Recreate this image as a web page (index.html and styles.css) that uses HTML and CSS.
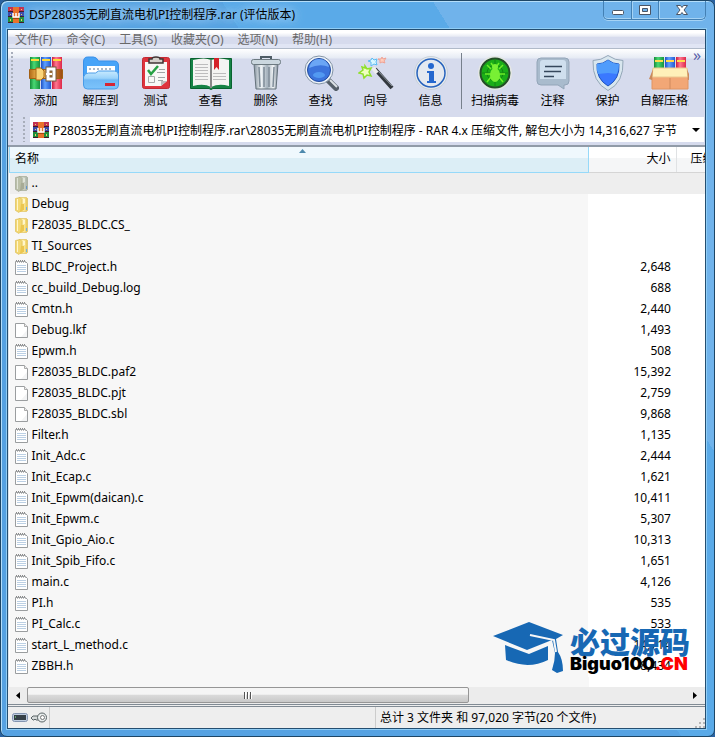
FILE: index.html
```html
<!DOCTYPE html>
<html lang="zh-CN">
<head>
<meta charset="utf-8">
<title>DSP28035无刷直流电机PI控制程序.rar (评估版本)</title>
<link rel="stylesheet" href="styles.css">
</head>
<body>
<svg class="defs" aria-hidden="true">
  <defs>
    <linearGradient id="gold" x1="0" x2="1"><stop offset="0" stop-color="#f0d468"/><stop offset=".5" stop-color="#fff2ae"/><stop offset="1" stop-color="#e8c24a"/></linearGradient>
    <linearGradient id="grey" x1="0" x2="1"><stop offset="0" stop-color="#b4b9a4"/><stop offset=".5" stop-color="#d3d6c8"/><stop offset="1" stop-color="#a5afa5"/></linearGradient>
    <linearGradient id="steel" x1="0" x2="1"><stop offset="0" stop-color="#8795a1"/><stop offset=".3" stop-color="#f0f4f7"/><stop offset=".55" stop-color="#a3b0bb"/><stop offset=".8" stop-color="#f3f6f8"/><stop offset="1" stop-color="#7b8996"/></linearGradient>
    <linearGradient id="sky" x1="0" x2="0" y1="0" y2="1"><stop offset="0" stop-color="#c8eaff"/><stop offset=".4" stop-color="#9bd3fa"/><stop offset=".5" stop-color="#6fb8f5"/><stop offset="1" stop-color="#7cc4fb"/></linearGradient>
    <linearGradient id="green" x1="0" x2="1"><stop offset="0" stop-color="#158a38"/><stop offset=".4" stop-color="#49d873"/><stop offset="1" stop-color="#15913d"/></linearGradient>
    <linearGradient id="blue" x1="0" x2="1"><stop offset="0" stop-color="#1d50c4"/><stop offset=".4" stop-color="#5ea0ff"/><stop offset="1" stop-color="#2459cf"/></linearGradient>
    <linearGradient id="red" x1="0" x2="1"><stop offset="0" stop-color="#c81a3c"/><stop offset=".4" stop-color="#ff7890"/><stop offset="1" stop-color="#dd2848"/></linearGradient>
    <linearGradient id="leather" x1="0" x2="1"><stop offset="0" stop-color="#b06a18"/><stop offset=".3" stop-color="#ffc85c"/><stop offset="1" stop-color="#9c4a10"/></linearGradient>
    <symbol id="rar" viewBox="0 0 16 16">
      <path fill="#c23152" d="M0 0h16v5H0z"/><path fill="#3c4aa8" d="M0 5h16v5H0z"/><path fill="#1f8f3c" d="M0 10h16v6H0z"/>
      <path fill="#f0d060" d="M2 2h1v1H2zM13 2h1v1h-1zM2 7h1v1H2zM13 7h1v1h-1zM2 12h1v2H2zM13 12h1v2h-1z"/>
      <path fill="#401828" d="M0 4h16v1H0zM0 9h16v1H0zM0 15h16v1H0z"/>
      <path fill="#e8722c" d="M5 0h6v16H5z"/><path fill="#a84410" d="M5 11h6v1H5z"/>
      <path fill="none" stroke="#fff" stroke-width="1.500" d="M5 6v4h6V6M8 6v4"/>
    </symbol>
    <symbol id="folder" viewBox="0 0 13 17">
      <path fill="url(#gold)" stroke="#dfc260" stroke-width=".7" d="M4 1.500h7.500l1 1v12l-1 1H4z"/>
      <path fill="#f3d873" stroke="#dcbf5a" stroke-width=".7" d="M.5 2.500 5 1.500l2 2v10l-3 3-3.500-2z"/>
      <path fill="#ecc64f" d="M6 8h3v6l-4 2z"/><path fill="#fff6cc" d="M2 3h1v11H2zM8 3h2v4H8z"/><path fill="#6fb0e6" d="M11 11h1v3h-1z"/>
    </symbol>
    <symbol id="upfolder" viewBox="0 0 13 17">
      <path fill="url(#grey)" stroke="#a2a894" stroke-width=".7" d="M4 1.500h7.500l1 1v12l-1 1H4z"/>
      <path fill="#babfa9" stroke="#a0a693" stroke-width=".7" d="M.5 2.500 5 1.500l2 2v10l-3 3-3.500-2z"/>
      <path fill="#a7ab95" d="M6 8h3v6l-4 2z"/><path fill="#dfe3d7" d="M2 3h1v11H2zM8 3h2v4H8z"/><path fill="#6395cc" d="M11 11h1v3h-1z"/>
    </symbol>
    <symbol id="text" viewBox="0 0 13 17">
      <path fill="#fff" stroke="#9a9d9f" d="M.5 2.500h10l2 2v11H.5z"/>
      <path stroke="#bcd0e4" d="M2 6.500h9M2 8.500h9M2 10.500h9M2 12.500h9"/>
      <path stroke="#8a8a8a" stroke-dasharray="1 1" d="M1 1.500h10"/><path stroke="#bbb" stroke-dasharray="1 1" d="M2 3.500h9"/>
    </symbol>
    <symbol id="page" viewBox="0 0 13 17">
      <path fill="#fff" stroke="#9a9d9f" d="M.5 1.500h9l3 3v11H.5z"/><path fill="#eee" stroke="#aaa" d="M9.500 1.500v3h3"/>
      <path fill="#f3f4f5" d="m12 8-6 7h6z"/>
    </symbol>
  </defs>
</svg>
<div class="window">
  <header class="titlebar">
    <svg class="app-icon"><use href="#rar"/></svg>
    <h1>DSP28035无刷直流电机PI控制程序.rar (评估版本)</h1>
    <div class="window-buttons">
      <button aria-label="最小化"><svg width="14" height="14"><rect x="1.500" y="7.500" width="11" height="4" rx="1" fill="#fff" stroke="#4b5565"/></svg></button>
      <button aria-label="最大化"><svg width="14" height="14"><path d="M1.500 2.500h11v9h-11zM4.500 5.500v3h5v-3z" fill="#fff" fill-rule="evenodd" stroke="#4b5565"/></svg></button>
      <button class="close" aria-label="关闭"><svg width="14" height="14"><path d="M1.500 2.500h4L7 4.500l1.500-2h4L9 7l3.500 4.500h-4L7 9.500l-1.500 2h-4L5 7z" fill="#fff" stroke="#4b5565"/></svg></button>
    </div>
  </header>
  <main class="client">
    <nav class="menu">
      <button>文件(F)</button><button>命令(C)</button><button>工具(S)</button><button>收藏夹(O)</button><button>选项(N)</button><button>帮助(H)</button>
    </nav>
    <div class="rebar">
      <div class="grip"></div>
      <div class="bands">
        <div class="toolbar">
          <div class="tools">
            <button><svg viewBox="0 0 36 36"><path fill="url(#green)" d="M2 2h10v32H2z"/><path fill="url(#blue)" d="M13 2h10v32H13z"/><path fill="url(#red)" d="M24 2h10v32H24z"/><path fill="#ffda3a" d="M3 4h8v2H3zM14 4h8v2h-8zM25 4h8v2h-8z"/><path fill="url(#leather)" stroke="#a36014" d="M1.500 14.500h33v9h-33z"/><path fill="#fad579" stroke="#a86b16" d="M8 13h5l3 3v6l-3 3H8z"/><path fill="none" stroke="#725b3e" stroke-width="5" d="M20 14h6v10h-6z"/><path fill="none" stroke="#fff" stroke-width="3" d="M20 14h6v10h-6z"/><path stroke="#fff" stroke-width="2" d="M18 19h6"/></svg><span>添加</span></button>
            <button><svg viewBox="0 0 36 36"><path fill="#48a4f8" stroke="#3a90e8" d="M.5 7q0-5 4-5h6q3 0 5 4h16q4 0 4 5v17H.5z"/><path fill="#fff" d="M4 11h28v12H4z"/><path stroke="#a9b8c8" stroke-width="2" stroke-dasharray="2 2" d="M6 14h24"/><path fill="url(#sky)" stroke="#4a9ce8" d="M.5 22q1-4 5-4h7l3-2h16q4 0 4 4v10q0 4-4 4h-27q-4 0-4-4z"/><path fill="#d62634" d="M22 28h10v3H22z"/></svg><span>解压到</span></button>
            <button><svg viewBox="0 0 36 36"><rect x="4.500" y="2.500" width="27" height="31" rx="2" fill="#df343d" stroke="#c22a33"/><path fill="#f8f8f5" d="M7 7h22v19l-6 5H7z"/><path fill="#bbb" d="m29 26-6 5v-5z"/><path fill="#d4d0cb" stroke="#403535" stroke-width="1.500" d="M11 8V4h3q0-2 4-2t4 2h3v4z"/><path fill="none" stroke="#27a142" stroke-width="2.500" d="m10 15 3 4 7-8"/><path stroke="#a0a5a5" d="M21 14.500h6M19 17.500h8M20 22.500h7M20 25.500h5"/><path fill="none" stroke="#aaa" d="M10.500 21.500h6v6h-6z"/></svg><span>测试</span></button>
            <button><svg class="wide" viewBox="0 0 42 36"><path fill="#168345" stroke="#096330" d="M.5 3.500h41v30H23l-2 1-2-1H.5z"/><path fill="#f4f4f2" d="M3 5q12-3 18 0v27q-7-4-18-1zM21 5q8-3 18 0v26q-10-3-18 1z"/><path stroke="#bdbdbd" d="M5 9.500h13M5 12.500h13M5 15.500h13M5 18.500h13M5 21.500h13M5 24.500h13M23 18.500h13M23 21.500h13M23 24.500h13"/><path stroke="#888" stroke-width="2" d="M21 5v28"/><path fill="#d42129" d="M24 3h5v12l-2.500-3-2.500 3z"/></svg><span>查看</span></button>
            <button><svg viewBox="0 0 36 36"><path fill="none" stroke="#4e5c65" stroke-width="2" d="M13 4V2h10v2"/><path fill="url(#steel)" stroke="#65727b" d="M6 9h24l-2 25H8z"/><path stroke="#7d8b97" stroke-width="1.500" d="m11 12 1 20M16 12v20M21 12v20M26 12l-1 20"/><rect x="3.500" y="4.500" width="29" height="5" rx="2" fill="#cbd7df" stroke="#6c7980"/></svg><span>删除</span></button>
            <button><svg viewBox="0 0 36 36"><path stroke="#555f69" stroke-width="6" stroke-linecap="round" d="m25 25 8 8"/><path stroke="#dce2e6" stroke-width="2" d="m27 25 7 7"/><circle cx="16" cy="15" r="14" fill="#edf3f9" stroke="#8494a5"/><circle cx="16" cy="15" r="11.500" fill="#3c74dc" stroke="#234ba0"/><path fill="#6ba6f5" d="M6 13q2-9 10-9t10 8q-9-4-20 1z"/><ellipse cx="16" cy="20" rx="6" ry="3" fill="#5299f1"/></svg><span>查找</span></button>
            <button><svg viewBox="0 0 36 36"><path stroke="#33383e" stroke-width="4" d="m17 14 17 19"/><path stroke="#eee" stroke-width="4" d="m15 13 4 5"/><path stroke="#8a949a" d="m20 16 14 15"/><path fill="#efffbe" stroke="#8fe02a" stroke-width="1.500" d="m7 11 2 3 4-1-2 4 2 4-4-1-3 3-1-4-4-1 4-3-1-3 3 1z"/><path fill="#d7f7ff" stroke="#5cbcf4" d="m14 3 2 2 3-1-1 3 1 3-3-1-3 2v-4l-3-1 3-1z"/><path fill="#ffcdbc" stroke="#f0a294" d="m24 2 1 2 3-1-2 3 1 2-3-1-2 1V5l-2-1h3z"/></svg><span>向导</span></button>
            <button><svg viewBox="0 0 36 36"><circle cx="18" cy="18" r="16.500" fill="#e6eaee" stroke="#c8d1da"/><circle cx="18" cy="18" r="14" fill="#e4e9f0" stroke="#2763bd" stroke-width="1.500"/><circle cx="18" cy="11" r="3" fill="#2568ce"/><path fill="#2568ce" d="M14 16h7v10h2v2h-9v-2h2v-8h-2z"/></svg><span>信息</span></button>
            <span class="separator"></span>
            <button class="scan"><svg viewBox="0 0 36 36"><circle cx="18" cy="18" r="16" fill="#1aad18" stroke="#e4e6e4" stroke-width="2"/><circle cx="18" cy="18" r="14.500" fill="none" stroke="#254e28" stroke-width="2"/><circle cx="18" cy="18" r="8" fill="none" stroke="#138610"/><path stroke="#138610" d="M18 5v26M5 18h26"/><path fill="none" stroke="#6eed28" stroke-width="1.500" d="m10 10 4 4M26 10l-4 4M8 19h6M22 19h6M10 27l4-5M26 27l-4-5M14 8l2 3M22 8l-2 3"/><ellipse cx="18" cy="20" rx="5" ry="7" fill="#78f034"/><circle cx="18" cy="12" r="3" fill="#78f034"/></svg><span>扫描病毒</span></button>
            <button><svg viewBox="0 0 36 36"><path fill="#a9bbcd" stroke="#93a5b8" d="M6 3h24q4 0 4 4v19q0 4-4 4h-1v4l-6-4H6q-4 0-4-4V7q0-4 4-4z"/><path fill="#cfdfee" d="M8 5h20q3 0 3 3v16H5V8q0-3 3-3z"/><path stroke="#35475c" stroke-width="1.500" d="M10 11.500h17M9 16.500h17M9 21.500h10"/></svg><span>注释</span></button>
            <button><svg viewBox="0 0 36 36"><path fill="#d8e6ee" stroke="#94a7b8" d="M18 .5q7 5 15 5 1 22-15 30Q2 27 3 5.500q8 0 15-5z"/><path fill="#3a78ff" stroke="#2156be" d="M18 5q5 4 11 4 1 15-11 22Q6 24 7 9q6 0 11-4z"/><path fill="#4f9cfc" d="M18 5q5 4 11 4 0 5-2 10l-9-1-10 1q-2-5-1-10 6 0 11-4z"/></svg><span>保护</span></button>
            <button class="sfx"><svg class="wide" viewBox="0 0 42 36"><path fill="url(#green)" d="M5 2h10v18H5z"/><path fill="url(#blue)" d="M16 2h10v18H16z"/><path fill="url(#red)" d="M27 2h10v18H27z"/><path fill="#ffdc49" d="M6 5h8v2H6zM17 5h8v2h-8zM28 5h8v2h-8z"/><path fill="#f2a776" stroke="#e09462" d="M3 20h36v14H3z"/><path fill="#fff0b9" stroke="#ecc890" d="M4 13h34l1 9H3z"/><path fill="#c98a5c" d="M4 14 0 24l3 1zM38 14l4 10-3 1z"/><path stroke="#d08a5c" d="M21 23v11"/></svg><span>自解压格式</span></button>
          </div>
          <button class="more" aria-label="更多">»</button>
        </div>
        <div class="address">
          <div class="grip"></div>
          <div class="address-field">
            <svg class="app-icon"><use href="#rar"/></svg>
            <input aria-label="地址" value="P28035无刷直流电机PI控制程序.rar\28035无刷直流电机PI控制程序 - RAR 4.x 压缩文件, 解包大小为 14,316,627 字节">
            <button aria-label="展开"><svg width="8" height="4"><path d="M0 0h8L4 4z"/></svg></button>
          </div>
        </div>
      </div>
    </div>
    <section class="files">
      <table>
        <colgroup><col><col class="size-col"><col class="packed-col"></colgroup>
        <thead><tr><th class="sorted">名称<svg class="sort" width="7" height="4"><path d="M0 4 3.500 0 7 4z" fill="#4d89ad"/></svg></th><th class="num">大小</th><th class="packed">压缩后大小</th></tr></thead>
        <tbody>
          <tr class="parent"><td><div class="file"><svg><use href="#upfolder"/></svg>..</div></td><td></td><td></td></tr>
          <tr><td><div class="file"><svg><use href="#folder"/></svg>Debug</div></td><td></td><td></td></tr>
          <tr><td><div class="file"><svg><use href="#folder"/></svg>F28035_BLDC.CS_</div></td><td></td><td></td></tr>
          <tr><td><div class="file"><svg><use href="#folder"/></svg>TI_Sources</div></td><td></td><td></td></tr>
          <tr><td><div class="file"><svg><use href="#text"/></svg>BLDC_Project.h</div></td><td>2,648</td><td></td></tr>
          <tr><td><div class="file"><svg><use href="#text"/></svg>cc_build_Debug.log</div></td><td>688</td><td></td></tr>
          <tr><td><div class="file"><svg><use href="#text"/></svg>Cmtn.h</div></td><td>2,440</td><td></td></tr>
          <tr><td><div class="file"><svg><use href="#page"/></svg>Debug.lkf</div></td><td>1,493</td><td></td></tr>
          <tr><td><div class="file"><svg><use href="#text"/></svg>Epwm.h</div></td><td>508</td><td></td></tr>
          <tr><td><div class="file"><svg><use href="#page"/></svg>F28035_BLDC.paf2</div></td><td>15,392</td><td></td></tr>
          <tr><td><div class="file"><svg><use href="#page"/></svg>F28035_BLDC.pjt</div></td><td>2,759</td><td></td></tr>
          <tr><td><div class="file"><svg><use href="#page"/></svg>F28035_BLDC.sbl</div></td><td>9,868</td><td></td></tr>
          <tr><td><div class="file"><svg><use href="#text"/></svg>Filter.h</div></td><td>1,135</td><td></td></tr>
          <tr><td><div class="file"><svg><use href="#text"/></svg>Init_Adc.c</div></td><td>2,444</td><td></td></tr>
          <tr><td><div class="file"><svg><use href="#text"/></svg>Init_Ecap.c</div></td><td>1,621</td><td></td></tr>
          <tr><td><div class="file"><svg><use href="#text"/></svg>Init_Epwm(daican).c</div></td><td>10,411</td><td></td></tr>
          <tr><td><div class="file"><svg><use href="#text"/></svg>Init_Epwm.c</div></td><td>5,307</td><td></td></tr>
          <tr><td><div class="file"><svg><use href="#text"/></svg>Init_Gpio_Aio.c</div></td><td>10,313</td><td></td></tr>
          <tr><td><div class="file"><svg><use href="#text"/></svg>Init_Spib_Fifo.c</div></td><td>1,651</td><td></td></tr>
          <tr><td><div class="file"><svg><use href="#text"/></svg>main.c</div></td><td>4,126</td><td></td></tr>
          <tr><td><div class="file"><svg><use href="#text"/></svg>PI.h</div></td><td>535</td><td></td></tr>
          <tr><td><div class="file"><svg><use href="#text"/></svg>PI_Calc.c</div></td><td>533</td><td></td></tr>
          <tr><td><div class="file"><svg><use href="#text"/></svg>start_L_method.c</div></td><td>14,714</td><td></td></tr>
          <tr><td><div class="file"><svg><use href="#text"/></svg>ZBBH.h</div></td><td>8,434</td><td></td></tr>
        </tbody>
      </table>
      <div class="filler"></div>
      <div class="watermark">
        <svg width="72" height="54" viewBox="0 0 72 54" fill="#1768b4"><path d="M0 14 36 0l34 13-7 4 2 13q5 7 5 19l-6 2-5-3q3-9 3-17l-3-13-25 10z"/><path d="m12 23 24 9 19-8v14q-20 10-42 0z"/><path d="m37 13 24 5 2 12" fill="none" stroke="#f7f7f7" stroke-width="2"/></svg>
        <div class="brand"><strong>必过源码</strong><b>Biguo100<em>.CN</em></b></div>
      </div>
    </section>
    <div class="scrollbar">
      <button aria-label="向左"><svg width="4" height="7"><path d="M4 0v7L0 3.500z"/></svg></button>
      <div class="track"><div class="thumb"><i></i></div></div>
      <button aria-label="向右"><svg width="4" height="7"><path d="M0 0v7l4-3.500z"/></svg></button>
    </div>
    <footer class="status">
      <div class="status-icons">
        <svg width="16" height="9"><rect x=".5" y=".5" width="15" height="8" rx="2" fill="#bfcde0" stroke="#8394b0"/><rect x="2" y="2" width="12" height="5" fill="#364047"/><path d="M3 4h1" stroke="#8f8"/></svg>
        <svg width="17" height="11"><path d="M10 4H2L0 6l2 2h1l1-1 1 1h5z" fill="#d6dada" stroke="#5b6466"/><circle cx="11" cy="5.500" r="4.500" fill="#e9eded" stroke="#5b6466"/><circle cx="11.500" cy="5.500" r="2" fill="#fff" stroke="#777"/></svg>
      </div>
      <div class="selection"></div>
      <div class="total">总计 3 文件夹 和 97,020 字节(20 个文件)</div>
      <svg class="resize" width="10" height="10" fill="#b5b5b5"><path d="M8 0h2v2H8zM4 4h2v2H4zM8 4h2v2H8zM0 8h2v2H0zM4 8h2v2H4zM8 8h2v2H8z"/></svg>
    </footer>
  </main>
</div>
</body>
</html>
```
FILE: styles.css
```css
* { box-sizing: border-box; }
body {
  margin: 0;
  background: #2a62a0;
  color: #000;
  font: 12px/18px "Noto Sans", "Noto Sans CJK SC", sans-serif;
}
button, input { font: inherit; color: inherit; border: 0; background: none; padding: 0; margin: 0; }
.defs { position: absolute; width: 0; height: 0; }
.window {
  min-height: 100vh;
  display: flex;
  flex-direction: column;
  padding: 0 8px 7px 6px;
  border: 1px solid #1d4666;
  border-radius: 7px;
  box-shadow: inset 1px 1px #b4defa;
  background: linear-gradient(58deg, #56a2e2 0 58%, #5aaae8 58% 76%, #70b3eb 76%);
}
.titlebar { display: flex; height: 28px; gap: 5px; padding-left: 1px; }
.app-icon { width: 16px; height: 16px; flex: none; }
.titlebar .app-icon { margin-top: 6px; }
h1 {
  flex: 1;
  margin: 4px 0 0;
  font-size: 12px;
  line-height: 20px;
  font-weight: 400;
  white-space: nowrap;
  text-shadow: 0 0 8px #b4dbfa, 0 0 12px #b4dbfa;
}
.window-buttons {
  display: flex;
  height: 19px;
  border: 1px solid #4380b4;
  border-top: 0;
  border-radius: 0 0 5px 5px;
  box-shadow: inset 0 -1px #a5d3f5, 0 1px #a5d3f5;
}
.window-buttons button { width: 27px; display: grid; place-items: center; }
.window-buttons button + button { border-left: 1px solid #4380b4; box-shadow: inset 1px 0 #a5d3f5; }
.window-buttons .close { width: 47px; }
.client {
  flex: 1;
  display: flex;
  flex-direction: column;
  min-width: 0;
  border: 1px solid #244e70;
  background: #eee;
  box-shadow: 0 0 0 1px #90cdf5;
}
.menu {
  display: flex;
  height: 19px;
  gap: 14px;
  padding-left: 7px;
  background: linear-gradient(#fff 0 15%, #e8ebf4 35%, #d6dbed 40% 75%, #e0e5f4 80%);
  border-bottom: 1px solid #b0bac9;
  color: #696969;
}
.menu button { line-height: 19px; white-space: nowrap; }
.rebar {
  display: flex;
  height: 98px;
  padding-left: 3px;
  background: linear-gradient(#fff, #e6ebf4 9px, #d6dbed 10px);
  border-bottom: 2px solid #919ba8;
}
.grip { width: 3px; flex: none; margin: 3px 0; background: radial-gradient(circle at 1px 1px, #a8aebb 1px, transparent 1px) 0 0 / 3px 4px; }
.bands { flex: 1; min-width: 0; }
.toolbar { display: flex; height: 67px; }
.tools { flex: 1; min-width: 0; display: flex; overflow: hidden; padding-left: 4px; }
.tools button { flex: none; width: 55px; padding-top: 6px; display: flex; flex-direction: column; align-items: center; gap: 1px; white-space: nowrap; }
.tools svg { width: 36px; height: 36px; }
.tools .wide { width: 42px; }
.tools .scan { width: 60px; }
.tools .sfx { width: 70px; }
.separator { flex: none; width: 1px; height: 56px; margin: 4px 3px; background: #77808c; }
.more { width: 16px; font-size: 16px; line-height: 12px; align-self: flex-start; color: #5860a8; }
.address { display: flex; height: 29px; padding: 1px 1px 3px 9px; gap: 4px; }
.address .grip { margin: 0; }
.address-field { flex: 1; min-width: 0; display: flex; align-items: center; padding: 0 3px; gap: 4px; background: #fff; }
.address-field input { flex: 1; min-width: 0; height: 22px; }
.address-field button { width: 10px; height: 20px; display: grid; place-items: center; }
.files { position: relative; flex: 1; display: flex; flex-direction: column; background: #fff; border-left: 1px solid #dce3e8; }
table { width: 100%; table-layout: fixed; border-collapse: collapse; }
.size-col { width: 88px; }
.packed-col { width: 29px; }
th { height: 25px; padding: 0 5px; font-weight: 400; text-align: left; overflow: hidden; white-space: nowrap; background: linear-gradient(#fff 45%, #f5f6f7 45%); border-right: 1px solid #e0e2e4; border-bottom: 1px solid #d5d5d5; }
.sorted { position: relative; background: linear-gradient(#eff8fd 45%, #dceef6 45%); border: 1px solid #96d9f9; border-width: 0 1px 1px; }
.sort { position: absolute; top: 2px; left: 50%; }
.num { text-align: right; }
.packed { padding: 0 0 0 14px; border-right: 0; }
td { height: 21px; padding: 0 5px 0 0; text-align: right; line-height: 20px; }
td:first-child { background: #f7f7f7; padding: 0 0 0 5px; text-align: left; }
.parent td, .parent td:first-child { background: #eee; }
.file { display: flex; align-items: center; height: 21px; gap: 4px; }
.file svg { width: 13px; height: 17px; flex: none; }
.filler { flex: 1; margin-right: 116px; background: #f7f7f7; }
.watermark { position: absolute; right: 15px; bottom: 11px; display: flex; align-items: center; gap: 5px; }
.brand { display: flex; flex-direction: column; }
.brand strong { font: 900 30px/30px "Noto Sans CJK SC", sans-serif; color: #1768b4; }
.brand b { font: 900 18px/18px Inter, sans-serif; }
.brand em { color: #f00; font-style: normal; }
.scrollbar { display: flex; height: 17px; padding: 0 1px 1px; background: #ececec; }
.scrollbar button { width: 18px; display: grid; place-items: center; }
.track { flex: 1; }
.thumb { width: 67%; height: 16px; display: grid; place-items: center; border: 1px solid #969696; border-radius: 2px; background: linear-gradient(#f5f5f5 0 45%, #dadada 50%, #c9c9c9); }
.thumb i { width: 8px; height: 7px; background: repeating-linear-gradient(90deg, #555 0 1px, #fff 1px 2px, transparent 2px 3px); }
.status { display: flex; height: 24px; border-top: 3px double #818b94; background: #eee; }
.status-icons { display: flex; align-items: center; gap: 3px; width: 42px; padding-left: 4px; border-right: 1px solid #ccc; }
.selection { flex: 1; border-right: 1px solid #ccc; }
.total { flex: 1; margin-right: -10px; padding-left: 4px; line-height: 22px; white-space: nowrap; }
.resize { align-self: flex-end; }
```
